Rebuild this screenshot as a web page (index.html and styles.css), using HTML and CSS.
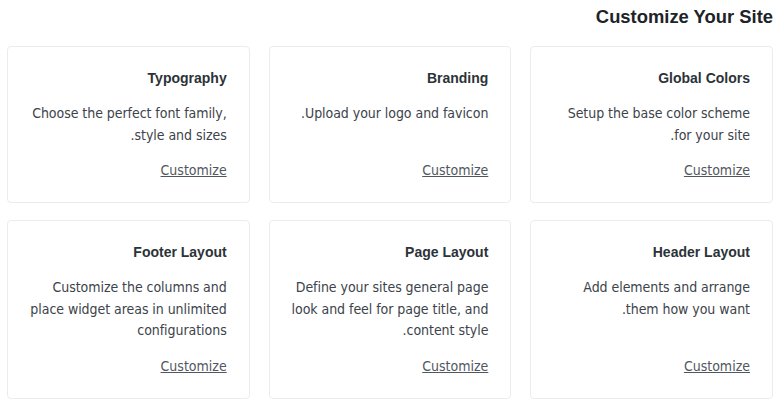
FILE: index.html
```html
<!DOCTYPE html>
<html lang="en" dir="rtl">
<head>
<meta charset="utf-8">
<link rel="stylesheet" href="styles.css">
</head>
<body>
<main class="page">
  <h1 class="page-title">Customize Your Site</h1>
  <div class="grid">
    <div class="card">
      <h2 class="card-title">Global Colors</h2>
      <p class="card-text">Setup the base color scheme for your site.</p>
      <a class="card-link" href="#">Customize</a>
    </div>
    <div class="card">
      <h2 class="card-title">Branding</h2>
      <p class="card-text">Upload your logo and favicon.</p>
      <a class="card-link" href="#">Customize</a>
    </div>
    <div class="card">
      <h2 class="card-title">Typography</h2>
      <p class="card-text">Choose the perfect font family, style and sizes.</p>
      <a class="card-link" href="#">Customize</a>
    </div>
    <div class="card">
      <h2 class="card-title">Header Layout</h2>
      <p class="card-text">Add elements and arrange them how you want.</p>
      <a class="card-link" href="#">Customize</a>
    </div>
    <div class="card">
      <h2 class="card-title">Page Layout</h2>
      <p class="card-text">Define your sites general page look and feel for page title, and content style.</p>
      <a class="card-link" href="#">Customize</a>
    </div>
    <div class="card">
      <h2 class="card-title">Footer Layout</h2>
      <p class="card-text">Customize the columns and place widget areas in unlimited configurations</p>
      <a class="card-link" href="#">Customize</a>
    </div>
  </div>
</main>
</body>
</html>
```

FILE: styles.css
```css
html, body {
  margin: 0;
  padding: 0;
  background: #fff;
}
.page {
  padding: 0 7px;
  font-family: "DejaVu Sans Condensed", "DejaVu Sans", sans-serif;
}
.page-title {
  margin: 0;
  padding: 6px 0 0;
  font-family: "Liberation Sans", Arial, sans-serif;
  font-size: 18.4px;
  font-weight: 700;
  line-height: 22px;
  color: #1d2327;
}
.grid {
  margin-top: 18px;
  display: grid;
  grid-template-columns: repeat(3, 1fr);
  column-gap: 19px;
  row-gap: 17px;
}
.card {
  display: flex;
  flex-direction: column;
  align-items: flex-start;
  border: 1px solid #ececec;
  border-radius: 4px;
  padding: 22px 22px 21px 20px;
}
.card-title {
  margin: 0 0 16px;
  font-family: "Liberation Sans", Arial, sans-serif;
  font-size: 14px;
  font-weight: 700;
  line-height: 18px;
  color: #2c3338;
}
.card-text {
  margin: 0 0 14px;
  font-size: 14px;
  letter-spacing: -0.05px;
  line-height: 21.5px;
  color: #3c434a;
}
.card-link {
  margin-top: auto;
  font-size: 14px;
  line-height: 21px;
  color: #50575e;
  text-decoration: underline;
}
```
